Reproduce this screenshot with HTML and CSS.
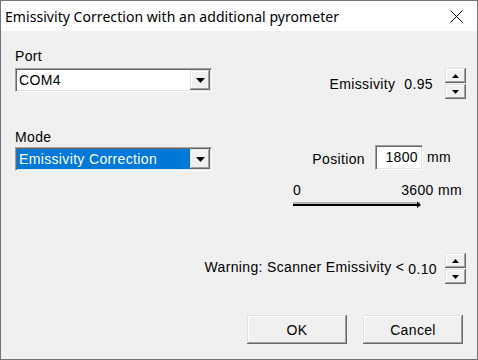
FILE: index.html
```html
<!DOCTYPE html>
<html>
<head>
<meta charset="utf-8">
<link rel="stylesheet" href="styles.css">
</head>
<body>
<div class="window">
  <div class="titlebar">
    <span class="title">Emissivity Correction with an additional pyrometer</span>
    <svg class="close" width="13" height="13" viewBox="0 0 13 13"><path d="M0.5 0.5 L12.5 12.5 M12.5 0.5 L0.5 12.5" stroke="#000" stroke-width="1"/></svg>
  </div>
  <div class="content">
    <div class="row row1">
      <div class="field">
        <div class="label">Port</div>
        <div class="combo sunken">
          <span class="combo-text">COM4</span>
          <span class="dd-btn raised"><svg width="9" height="5" viewBox="0 0 9 5"><polygon points="0,0 9,0 4.5,5" fill="#000"/></svg></span>
        </div>
      </div>
      <div class="emis">
        <span class="txt">Emissivity</span>
        <span class="txt val">0.95</span>
        <div class="spin">
          <span class="sbtn raised"><svg width="7" height="4" viewBox="0 0 7 4"><polygon points="0,4 7,4 3.5,0" fill="#000"/></svg></span>
          <span class="sbtn raised"><svg width="7" height="4" viewBox="0 0 7 4"><polygon points="0,0 7,0 3.5,4" fill="#000"/></svg></span>
        </div>
      </div>
    </div>
    <div class="row row2">
      <div class="field">
        <div class="label">Mode</div>
        <div class="combo sunken">
          <span class="combo-text sel">Emissivity Correction</span>
          <span class="dd-btn raised"><svg width="9" height="5" viewBox="0 0 9 5"><polygon points="0,0 9,0 4.5,5" fill="#000"/></svg></span>
        </div>
      </div>
      <div class="pos">
        <span class="txt pos-label">Position</span>
        <span class="input sunken">1800</span>
        <span class="txt unit">mm</span>
      </div>
    </div>
    <div class="row row3">
      <div class="scale">
        <div class="scale-labels"><span>0</span><span>3600 mm</span></div>
        <svg class="scale-line" width="130" height="8" viewBox="0 0 130 8">
          <rect x="0" y="2" width="127" height="2" fill="#b4b4b4"/>
          <rect x="0" y="4" width="125" height="2" fill="#000"/>
          <polygon points="124,1.5 128,5 124,8" fill="#000"/>
        </svg>
      </div>
    </div>
    <div class="row row4">
      <div class="warn">
        <span class="txt warn-label">Warning: Scanner Emissivity &lt;</span>
        <span class="txt warn-val">0.10</span>
        <div class="spin">
          <span class="sbtn raised"><svg width="7" height="4" viewBox="0 0 7 4"><polygon points="0,4 7,4 3.5,0" fill="#000"/></svg></span>
          <span class="sbtn raised"><svg width="7" height="4" viewBox="0 0 7 4"><polygon points="0,0 7,0 3.5,4" fill="#000"/></svg></span>
        </div>
      </div>
    </div>
    <div class="row buttons">
      <span class="btn raised">OK</span>
      <span class="btn raised">Cancel</span>
    </div>
  </div>
</div>
</body>
</html>
```

FILE: styles.css
```css
* { box-sizing: border-box; }
html, body { margin: 0; padding: 0; }
body {
  width: 478px;
  height: 360px;
  overflow: hidden;
  background: #fff;
  font-family: "Liberation Sans", Arial, sans-serif;
  font-size: 14px;
  letter-spacing: 0.35px;
  color: #000;
}
.window {
  width: 478px;
  height: 360px;
  border: 1px solid #747474;
  background: #f0f0f0;
  display: flex;
  flex-direction: column;
}
.titlebar {
  height: 30px;
  background: #fff;
  display: flex;
  align-items: center;
  padding-left: 4px;
}
.title {
  font-family: "Noto Sans", sans-serif;
  font-size: 14px;
  letter-spacing: 0.05px;
  line-height: 20px;
  margin-top: 1px;
}
.close { margin-left: auto; margin-right: 14px; margin-top: 1px; }
.content {
  flex: 1;
  display: flex;
  flex-direction: column;
  padding: 17px 11px 0 14px;
}
.row { display: flex; align-items: flex-start; }
.field { width: 197px; display: flex; flex-direction: column; }
.label { height: 16px; line-height: 16px; }
.row1 .label { margin-bottom: 4px; }
.row2 .label { margin-bottom: 2px; }
.txt { line-height: 16px; white-space: nowrap; }

.sunken {
  background: #fff;
  border: 1px solid;
  border-color: #a0a0a0 #fff #fff #a0a0a0;
  box-shadow: inset 1px 1px 0 #696969, inset -1px -1px 0 #e3e3e3;
}
.raised {
  background: #f0f0f0;
  box-shadow: inset -1px -1px 0 #696969, inset 1px 1px 0 #e3e3e3, inset -2px -2px 0 #a0a0a0, inset 2px 2px 0 #fff;
}
.combo {
  width: 197px;
  height: 24px;
  padding: 1px;
  display: flex;
}
.combo-text {
  flex: 1;
  padding-left: 2px;
  line-height: 20px;
  white-space: nowrap;
}
.sel { background: #0078d7; color: #fff; }
.dd-btn {
  width: 20px;
  display: flex;
  align-items: center;
  justify-content: center;
}
.dd-btn svg { display: block; margin-top: 1px; }

.emis {
  margin-left: auto;
  margin-top: 20px;
  display: flex;
  align-items: center;
}
.val { margin-left: 9px; }
.emis .spin { margin-left: 12px; }
.spin { display: flex; flex-direction: column; gap: 1px; }
.sbtn {
  width: 21px;
  height: 15px;
  display: flex;
  align-items: center;
  justify-content: center;
}
.sbtn svg { display: block; }

.row2 { margin-top: 30px; }
.pos {
  margin-left: auto;
  margin-right: 15px;
  margin-top: 16px;
  display: flex;
  align-items: center;
}
.pos-label { margin-top: 2px; }
.input {
  margin-left: 10px;
  width: 48px;
  height: 25px;
  text-align: right;
  padding-right: 4px;
  line-height: 22px;
}
.unit { margin-left: 4px; margin-top: -2px; }

.row3 { margin-top: 11px; }
.scale { margin-left: auto; margin-right: 4px; width: 169px; }
.scale-labels { display: flex; justify-content: space-between; line-height: 16px; }
.scale-line { display: block; margin-top: 2px; }

.row4 { margin-top: 45px; }
.warn { margin-left: auto; display: flex; align-items: flex-start; }
.warn-label { margin-top: 6px; }
.warn-val { margin-top: 8px; margin-left: 4px; }
.warn .spin { margin-left: 8px; }

.buttons {
  margin-top: 31px;
  justify-content: flex-end;
  gap: 16px;
  margin-right: 3px;
}
.btn {
  width: 100px;
  height: 29px;
  display: flex;
  align-items: center;
  justify-content: center;
}
```
